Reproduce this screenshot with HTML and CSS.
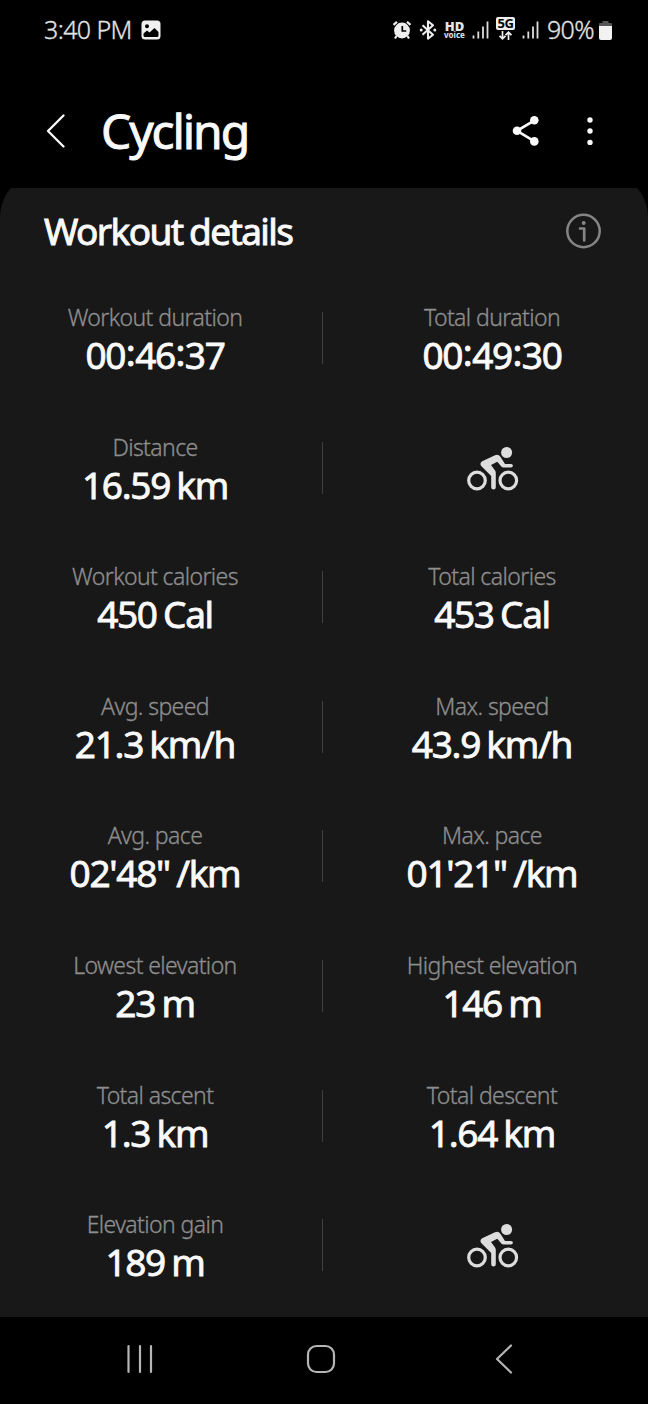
FILE: index.html
```html
<!DOCTYPE html>
<html lang="en">
<head>
  <meta charset="UTF-8">
  <meta name="viewport" content="width=device-width, initial-scale=1.0">
  <title>Cycling - Workout details</title>
  <link rel="stylesheet" href="styles.css">
</head>
<body>
  <div class="status-bar">
    <span class="time">3:40 PM</span>
    <svg class="picture-icon" width="20" height="20" viewBox="0 0 20 20">
      <rect x="0.5" y="0.5" width="19" height="19" rx="3.5" fill="#f0f0f0"/>
      <circle cx="6" cy="6.3" r="2" fill="#000"/>
      <path d="M2.500 15.500v-2l3.500-3 2.500 2 5-4.500 4 4v3.500q0 1.500-1.500 1.500H4q-1.500 0-1.500-1.500z" fill="#000"/>
    </svg>
    <div class="status-icons">
      <svg width="20" height="20" viewBox="0 0 20 20">
        <circle cx="10" cy="10.500" r="7.900" fill="#eee"/>
        <path d="M1.500 4.800L5 1.800M18.500 4.800L15 1.800M4.500 16L3 18.500M15.500 16L17 18.500" stroke="#eee" stroke-width="2.200" fill="none"/>
        <path d="M10.300 6v5h4" stroke="#000" stroke-width="1.700" fill="none"/>
      </svg>
      <svg class="bluetooth" width="18" height="20" viewBox="0 0 18 20">
        <path d="M3.500 5.300l10.500 9.400-5 4V1.300l5 4L3.500 14.700" stroke="#eee" stroke-width="2.100" fill="none" stroke-linejoin="round"/>
        <circle cx="2.200" cy="10" r="1.500" fill="#eee"/>
        <circle cx="15.800" cy="10" r="1.500" fill="#eee"/>
      </svg>
      <div class="hd"><b>HD</b><span>voice</span></div>
      <svg class="signal" width="17" height="18" viewBox="0 0 17 18">
        <path d="M1.500 14.500v3M6.300 10.500v7M11 5.500v12M15.500 0.500v17" stroke="#ddd" stroke-width="1.800"/>
      </svg>
      <div class="five-g">
        <b>5G</b>
        <svg width="15" height="9" viewBox="0 0 15 9">
          <path d="M4.500 0v8M1.500 4.800l3 3 3-3M10.500 9V1M7.500 4.200l3-3 3 3" stroke="#eee" stroke-width="1.700" fill="none"/>
        </svg>
      </div>
      <svg class="signal" width="17" height="18" viewBox="0 0 17 18">
        <path d="M1.500 14.500v3M6.300 10.500v7M11 5.500v12M15.500 0.500v17" stroke="#ddd" stroke-width="1.800"/>
      </svg>
      <span class="percent">90%</span>
      <svg class="battery" width="13" height="19" viewBox="0 0 13 19">
        <path d="M3.500 0h6v2H12q1 0 1 1v2H0V3q0-1 1-1h2.500z" fill="#555"/>
        <path d="M0 5h13v12q0 2-2 2H2q-2 0-2-2z" fill="#f2f2f2"/>
      </svg>
    </div>
  </div>

  <div class="header">
    <svg class="back" width="20" height="36" viewBox="0 0 20 36">
      <path d="M17.500 2.500L2 18l15.500 15.500" stroke="#fafafa" stroke-width="2.300" fill="none" stroke-linecap="round" stroke-linejoin="round"/>
    </svg>
    <h1>Cycling</h1>
    <svg class="share" width="28" height="32" viewBox="0 0 28 32">
      <path d="M22.500 5.300L5 15.800l17.500 10.600" stroke="#fafafa" stroke-width="2.700" fill="none"/>
      <circle cx="22.300" cy="5.200" r="4.300" fill="#fafafa"/>
      <circle cx="5" cy="15.800" r="4.300" fill="#fafafa"/>
      <circle cx="22.300" cy="26.400" r="4.300" fill="#fafafa"/>
    </svg>
    <svg class="more" width="8" height="30" viewBox="0 0 8 30">
      <circle cx="4" cy="4" r="2.700" fill="#fafafa"/>
      <circle cx="4" cy="15" r="2.700" fill="#fafafa"/>
      <circle cx="4" cy="26.400" r="2.700" fill="#fafafa"/>
    </svg>
  </div>

  <div class="content">
    <div class="card">
      <div class="card-title">
        <h2>Workout details</h2>
        <svg width="36" height="36" viewBox="0 0 36 36">
          <circle cx="17.500" cy="18" r="16.200" stroke="#858585" stroke-width="2.500" fill="none"/>
          <circle cx="17.700" cy="10.100" r="2" fill="#858585"/>
          <path d="M14 15.500h4.200v12" stroke="#858585" stroke-width="2.700" fill="none" stroke-linecap="round" stroke-linejoin="round"/>
        </svg>
      </div>

      <div class="row">
        <div class="item"><div class="label">Workout duration</div><div class="value">00<i>:</i>46<i>:</i>37</div></div>
        <div class="divider"></div>
        <div class="item"><div class="label">Total duration</div><div class="value">00<i>:</i>49<i>:</i>30</div></div>
      </div>
      <div class="row">
        <div class="item"><div class="label">Distance</div><div class="value">16.59 km</div></div>
        <div class="divider"></div>
        <svg class="bike" width="52" height="44" viewBox="0 0 52 44">
          <g id="rider">
            <circle cx="10" cy="33.500" r="8.300" stroke="#ddd" stroke-width="3.200" fill="none"/>
            <circle cx="41.300" cy="33.500" r="8.300" stroke="#ddd" stroke-width="3.200" fill="none"/>
            <circle cx="39.600" cy="5.500" r="5.500" fill="#ddd"/>
            <path d="M15.200 14.300L28 8.200q3.500-1.300 5.400 1.500L38 17h6q1.900 0 1.900 1.800t-1.900 1.800h-7.500q-1.300 0-2.200-1L30.300 14.700 24 18l3.900 5.300q.9 1.200.9 2.900v14q0 2.400-2.300 2.400t-2.300-2.400V29L14.700 19.500q-2.800-3 .5-5.200z" fill="#ddd"/>
          </g>
        </svg>
      </div>
      <div class="row">
        <div class="item"><div class="label">Workout calories</div><div class="value">450 Cal</div></div>
        <div class="divider"></div>
        <div class="item"><div class="label">Total calories</div><div class="value">453 Cal</div></div>
      </div>
      <div class="row">
        <div class="item"><div class="label">Avg. speed</div><div class="value">21.3 km/h</div></div>
        <div class="divider"></div>
        <div class="item"><div class="label">Max. speed</div><div class="value">43.9 km/h</div></div>
      </div>
      <div class="row">
        <div class="item"><div class="label">Avg. pace</div><div class="value">02'48" /km</div></div>
        <div class="divider"></div>
        <div class="item"><div class="label">Max. pace</div><div class="value">01'21" /km</div></div>
      </div>
      <div class="row">
        <div class="item"><div class="label">Lowest elevation</div><div class="value">23 m</div></div>
        <div class="divider"></div>
        <div class="item"><div class="label">Highest elevation</div><div class="value">146 m</div></div>
      </div>
      <div class="row">
        <div class="item"><div class="label">Total ascent</div><div class="value">1.3 km</div></div>
        <div class="divider"></div>
        <div class="item"><div class="label">Total descent</div><div class="value">1.64 km</div></div>
      </div>
      <div class="row">
        <div class="item"><div class="label">Elevation gain</div><div class="value">189 m</div></div>
        <div class="divider"></div>
        <svg class="bike" width="52" height="44" viewBox="0 0 52 44"><use href="#rider"/></svg>
      </div>
    </div>
  </div>

  <div class="nav-bar">
    <svg width="28" height="30" viewBox="0 0 28 30">
      <path d="M2.500 2v26M14 2v26M25 2v26" stroke="#b5b5b5" stroke-width="2.200" stroke-linecap="round"/>
    </svg>
    <svg class="home" width="30" height="30" viewBox="0 0 30 30">
      <rect x="2" y="2" width="26" height="26" rx="8.500" stroke="#b5b5b5" stroke-width="2.200" fill="none"/>
    </svg>
    <svg width="18" height="30" viewBox="0 0 18 30">
      <path d="M16 1.500L2 15l14 13.500" stroke="#b5b5b5" stroke-width="2.200" fill="none" stroke-linecap="round" stroke-linejoin="round"/>
    </svg>
  </div>
</body>
</html>
```
FILE: styles.css
```css
body {
  margin: 0;
  background-color: #000;
  color: #fafafa;
  font-family: "Noto Sans", "Open Sans", sans-serif;
  height: 1404px;
  display: flex;
  flex-direction: column;
  overflow: hidden;
}
svg {
  display: block;
  flex-shrink: 0;
}
.status-bar {
  height: 60px;
  box-sizing: border-box;
  padding: 0 36px 0 44px;
  display: flex;
  align-items: center;
  color: #e4e4e4;
  font-size: 25px;
  font-weight: 300;
}
.time, .percent {
  line-height: 34px;
  letter-spacing: -0.6px;
  -webkit-text-stroke: 0.3px #e4e4e4;
}
.time {
  margin: 0 9px 2px 0;
}
.status-icons {
  margin-left: auto;
  display: flex;
  align-items: center;
}
.bluetooth {
  margin-left: 7px;
}
.hd {
  margin-left: 7px;
  width: 21px;
  display: flex;
  flex-direction: column;
  align-items: center;
  line-height: 8px;
  font-size: 8px;
  font-weight: 700;
}
.hd b {
  font-size: 13px;
  line-height: 10px;
}
.signal {
  margin-left: 7px;
}
.five-g {
  margin: 0 0 4px 7px;
  display: flex;
  flex-direction: column;
  align-items: center;
  gap: 1px;
}
.five-g b {
  width: 19px;
  height: 13px;
  border-radius: 2px;
  background-color: #eee;
  color: #000;
  font-size: 13px;
  font-weight: 700;
  letter-spacing: -0.5px;
  line-height: 13px;
  text-align: center;
}
.percent {
  margin: 0 5px 2px 8px;
}
.header {
  height: 128px;
  box-sizing: border-box;
  padding: 14px 54px 0 46px;
  display: flex;
  align-items: center;
}
h1, h2 {
  margin: 0;
  font-weight: 400;
  -webkit-text-stroke: 0.9px #fafafa;
}
h1 {
  margin: 0 auto 1px 35px;
  font-size: 48px;
  letter-spacing: -2.1px;
}
.share {
  margin-right: 46px;
}
.content {
  height: 1129px;
  overflow: hidden;
}
.card {
  margin-top: -15px;
  height: 1144px;
  box-sizing: border-box;
  padding: 15px 42px 0 44px;
  border-radius: 44px 44px 0 0;
  background-color: #181818;
}
.card-title {
  height: 86px;
  margin-bottom: 27px;
  padding-right: 4px;
  display: flex;
  align-items: center;
  justify-content: space-between;
}
h2 {
  margin-bottom: 1px;
  font-size: 37px;
  letter-spacing: -1.6px;
  word-spacing: -1.5px;
}
.row {
  display: grid;
  grid-template-columns: 222px 112px 228px;
  justify-items: center;
  height: 129.6px;
}
.item {
  text-align: center;
  white-space: nowrap;
}
.label {
  color: #8e8e8e;
  font-size: 23px;
  font-weight: 300;
  letter-spacing: -0.6px;
  line-height: 32px;
  -webkit-text-stroke: 0.3px #8e8e8e;
}
.value {
  font-size: 37px;
  font-weight: 400;
  letter-spacing: -1.3px;
  word-spacing: -2px;
  line-height: 43px;
  -webkit-text-stroke: 0.8px #fafafa;
}
.value i {
  position: relative;
  top: -3px;
  padding: 0 0.7px;
  font-style: normal;
}
.divider {
  width: 1px;
  height: 52px;
  margin-top: 11px;
  background-color: #404040;
}
.bike {
  margin-top: 16px;
  margin-left: 1px;
}
.nav-bar {
  height: 84px;
  display: flex;
  align-items: center;
  justify-content: space-between;
  padding: 0 135px 0 126px;
}
.home {
  margin-right: 7px;
}
```
